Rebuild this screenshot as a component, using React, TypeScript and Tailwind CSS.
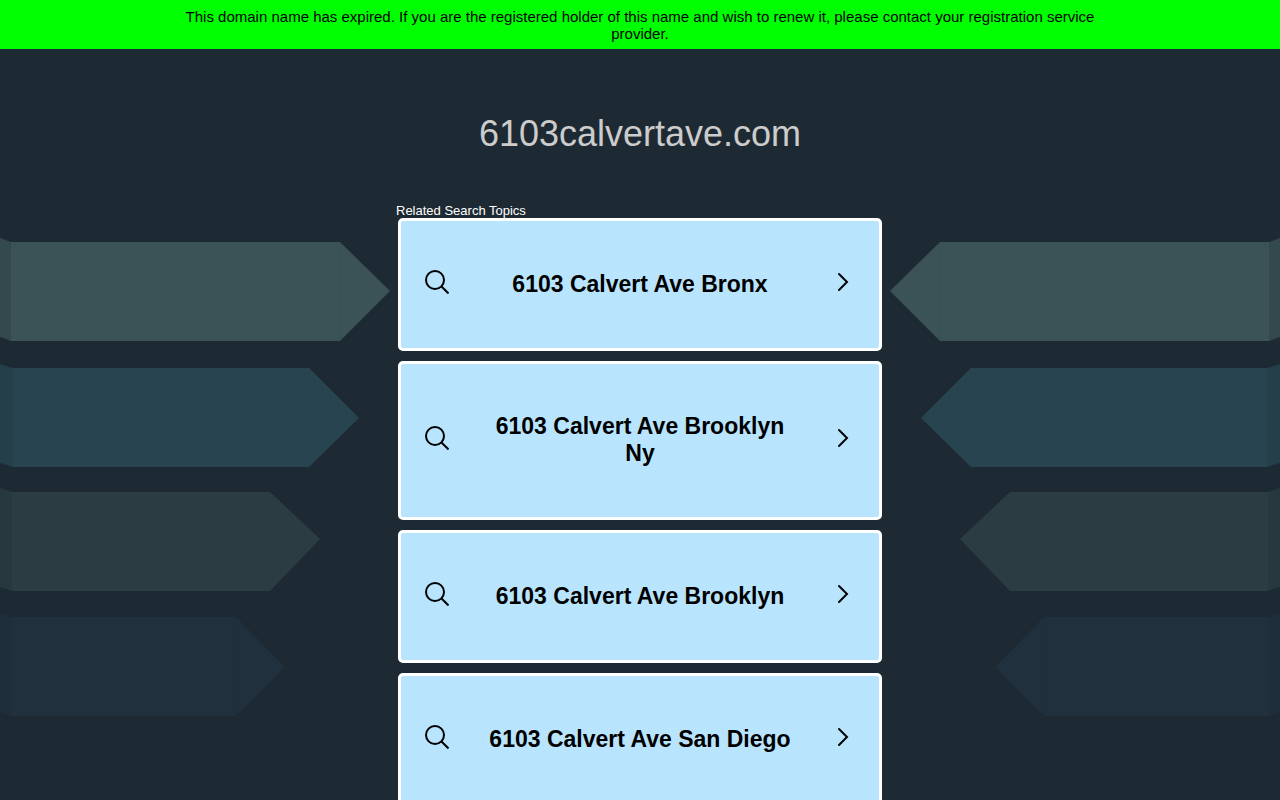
const topics = [
  '6103 Calvert Ave Bronx',
  '6103 Calvert Ave Brooklyn Ny',
  '6103 Calvert Ave Brooklyn',
  '6103 Calvert Ave San Diego',
];

const ribbons = [
  { top: 242, bottom: 341, fold: 11, bend: 340, tip: 390, mid: 291, color: '#3b5357', shade: '#34484f', seam: true },
  { top: 368, bottom: 467, fold: 13, bend: 309, tip: 359, mid: 418, color: '#284451', shade: '#263d4a', seam: true },
  { top: 492, bottom: 591, fold: 12, bend: 270, tip: 320, mid: 539, color: '#2b3d43', shade: '#28383f', seam: false },
  { top: 617, bottom: 716, fold: 12, bend: 236, tip: 285, mid: 667, color: '#20303c', shade: '#1f2e39', seam: true },
];

const Ribbons = () => (
  <g>
    {ribbons.map((r) => (
      <g key={r.top}>
        <polygon points={`0,${r.top - 4} ${r.fold},${r.top} ${r.fold},${r.bottom} 0,${r.bottom - 4}`} fill={r.shade} />
        <polygon
          points={`${r.fold},${r.top} ${r.bend},${r.top} ${r.tip},${r.mid} ${r.bend},${r.bottom} ${r.fold},${r.bottom}`}
          fill={r.color}
        />
        {r.seam && <path d={`M${r.bend + 0.5} ${r.top}V${r.bottom}`} stroke={r.shade} strokeOpacity="0.4" />}
      </g>
    ))}
  </g>
);

const Backdrop = () => (
  <svg
    className="absolute top-0 left-1/2 -translate-x-1/2 max-w-none pointer-events-none"
    width="1280"
    height="800"
    viewBox="0 0 1280 800"
    aria-hidden="true"
  >
    <Ribbons />
    <g transform="translate(1280 0) scale(-1 1)">
      <Ribbons />
    </g>
  </svg>
);

const SearchIcon = () => (
  <svg className="mb-1 shrink-0" width="24" height="24" viewBox="0 0 24 24" fill="none" stroke="black" strokeWidth="2" aria-hidden="true">
    <circle cx="10" cy="10" r="9" />
    <path d="M16.5 16.5L23.5 23.5" />
  </svg>
);

const ChevronIcon = () => (
  <svg className="mb-1 shrink-0" width="24" height="24" viewBox="0 0 24 24" fill="none" stroke="black" strokeWidth="2" aria-hidden="true">
    <path d="M8 4L16 12L8 20" strokeLinecap="round" />
  </svg>
);

export default function App() {
  return (
    <div className="relative min-h-screen overflow-hidden bg-[#1e2a33] font-['Liberation_Sans',Arial,sans-serif]">
      <Backdrop />

      <div className="relative bg-[#00ff00] px-40 pt-2 pb-[7px] text-center text-[15px] leading-[17px] text-black">
        This domain name has expired. If you are the registered holder of this name and wish to renew it, please contact
        your registration service provider.
      </div>

      <main className="relative mx-auto max-w-[484px]">
        <h1 className="pt-16 text-center text-[36px] leading-[41px] text-[#cccccc]">6103calvertave.com</h1>

        <h2 className="-ml-0.5 mt-[49px] text-[13px] leading-[15px] text-white">Related Search Topics</h2>
        <ul className="flex flex-col gap-2.5">
          {topics.map((topic) => (
            <li key={topic}>
              <a
                href="#"
                className="flex items-center justify-between rounded-[5px] border-3 border-white bg-[#b8e5fd] pt-[49px] pb-[50px] px-6 text-black"
              >
                <SearchIcon />
                <span className="w-[310px] text-center text-[23px] leading-[27px] font-bold">{topic}</span>
                <ChevronIcon />
              </a>
            </li>
          ))}
        </ul>
      </main>
    </div>
  );
}
